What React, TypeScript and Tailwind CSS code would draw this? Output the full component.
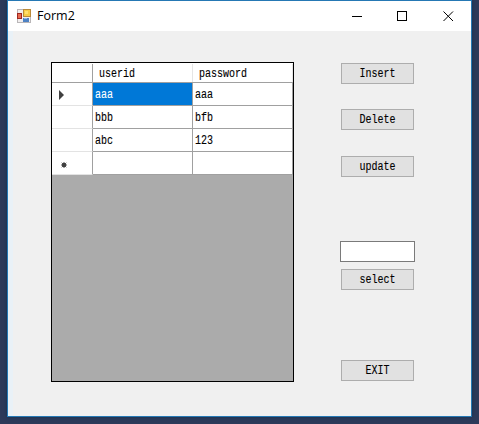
import React from "react";

const mono = "font-['Liberation_Mono','Noto_Sans_CJK_SC',monospace] text-[10px] leading-[12px] text-black";

function Label({ children, className = "" }: { children: React.ReactNode; className?: string }) {
  return <span className={`${mono} mt-[2px] inline-block scale-y-[1.25] [-webkit-text-stroke:0.1px] ${className}`}>{children}</span>;
}

function FormButton({ children, className = "" }: { children: React.ReactNode; className?: string }) {
  return (
    <button className={`ml-px flex h-[21px] w-[73px] items-center justify-center border border-[#adadad] bg-[#e1e1e1] ${className}`}>
      <Label className="mt-px">{children}</Label>
    </button>
  );
}

function AppIcon() {
  return (
    <svg width="14" height="14" viewBox="0 0 14 14" shapeRendering="crispEdges">
      <rect x="0.5" y="0.5" width="13" height="13" fill="#f1eeee" stroke="#b9b6b8" />
      <rect x="6.5" y="0.5" width="7" height="7" fill="#f7cc45" stroke="#b98a3a" />
      <rect x="8" y="2" width="3" height="3" fill="#ffe070" />
      <rect x="0.5" y="4.5" width="4" height="5" fill="#e66a50" stroke="#9e2620" />
      <rect x="6" y="9" width="6" height="4" fill="#4d82c4" />
      <rect x="7" y="9" width="3" height="1" fill="#91b9e5" />
    </svg>
  );
}

const rows = [
  { marker: "current", userid: "aaa", password: "aaa" },
  { marker: "", userid: "bbb", password: "bfb" },
  { marker: "", userid: "abc", password: "123" },
  { marker: "new", userid: "", password: "" },
];

function Marker({ kind }: { kind: string }) {
  if (kind === "current")
    return (
      <svg width="5" height="10" viewBox="0 0 5 10" className="ml-[7px] mt-[2px]">
        <path d="M0 0 5 5 0 10Z" fill="#404040" />
      </svg>
    );
  if (kind === "new")
    return (
      <svg width="6" height="6" viewBox="0 0 6 6" className="ml-[9px] mt-[3px]">
        <circle cx="3" cy="3" r="2.2" fill="#404040" />
        <path d="M3 0V6M0 3H6M0.7 0.7 5.3 5.3M5.3 0.7 0.7 5.3" stroke="#404040" strokeWidth="0.8" />
      </svg>
    );
  return null;
}

function DataGrid() {
  return (
    <div className="h-[320px] w-[243px] border border-black bg-[#ababab]">
      <div className="w-[241px] bg-white pt-px">
        <div className="flex h-[19px] border-b border-[#a0a0a0]">
          <div className="w-[41px] border-r border-[#a0a0a0]" />
          <div className="flex w-[100px] items-center border-r border-[#e5e5e5] pl-[6px]">
            <Label>userid</Label>
          </div>
          <div className="flex w-[100px] items-center border-r border-[#e5e5e5] pl-[6px]">
            <Label>password</Label>
          </div>
        </div>
        {rows.map((row, i) => (
          <div key={i} className="flex h-[23px]">
            <div className="flex w-[41px] items-center border-r border-b border-r-[#a0a0a0] border-b-[#e3e3e3]">
              <Marker kind={row.marker} />
            </div>
            <div className={`flex w-[100px] items-center border-r border-b border-[#a0a0a0] pl-[2px] ${i === 0 ? "bg-[#0078d7]" : ""}`}>
              <Label className={i === 0 ? "text-white!" : ""}>{row.userid}</Label>
            </div>
            <div className="flex w-[100px] items-center border-r border-b border-[#a0a0a0] pl-[2px]">
              <Label>{row.password}</Label>
            </div>
          </div>
        ))}
      </div>
    </div>
  );
}

export default function App() {
  return (
    <div className="h-[424px] w-[479px] overflow-hidden bg-[#2d3a5a] pl-[7px]">
      <div className="flex h-[417px] w-[465px] flex-col border border-[#2578b4] bg-[#f0f0f0] shadow-[0_0_4px_#12304f]">
        <header className="flex h-[30px] shrink-0 items-center bg-white pl-[9px]">
          <AppIcon />
          <span className="ml-[6px] font-['Open_Sans','Noto_Sans',sans-serif] text-[12.5px] leading-[16px] text-black">Form2</span>
          <svg width="102" height="12" viewBox="0 0 102 12" className="mr-[17px] ml-auto" fill="none" stroke="#000">
            <path d="M0 6.5H10" />
            <rect x="45.5" y="1.5" width="9" height="9" />
            <path d="M91.5 1.5 101 11M101 1.5 91.5 11" />
          </svg>
        </header>
        <main className="flex grow border-l-[5px] border-[#e9f1f7] pt-[31px] pl-[38px]">
          <DataGrid />
          <div className="ml-[46px] flex w-[75px] flex-col pt-px">
            <FormButton>Insert</FormButton>
            <FormButton className="mt-[25px]">Delete</FormButton>
            <FormButton className="mt-[26px]">update</FormButton>
            <input aria-label="Search" className="mt-[64px] h-[21px] w-[75px] border border-[#7a7a7a] bg-white px-1 text-[10px] outline-none" />
            <FormButton className="mt-[7px]">select</FormButton>
            <FormButton className="mt-[70px]">EXIT</FormButton>
          </div>
        </main>
      </div>
    </div>
  );
}
